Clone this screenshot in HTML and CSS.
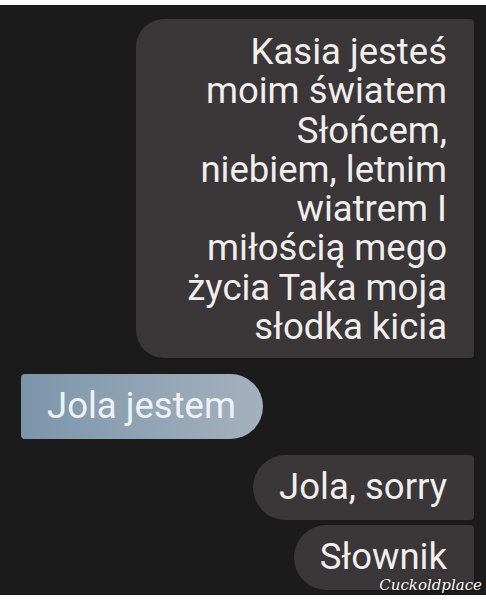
FILE: index.html
```html
<!DOCTYPE html>
<html lang="pl">
<head>
    <meta charset="UTF-8">
    <meta name="viewport" content="width=device-width, initial-scale=1.0">
    <title>Rozmowa</title>
    <link rel="stylesheet" href="styles.css">
</head>
<body>
    <div class="ekran">
        <div class="czat">
            <div class="dymek wyslany duzy">
                Kasia jesteś<br>
                moim światem<br>
                Słońcem,<br>
                niebiem, letnim<br>
                wiatrem I<br>
                miłością mego<br>
                życia Taka moja<br>
                słodka kicia
            </div>
            <div class="dymek odebrany">Jola jestem</div>
            <div class="dymek wyslany okragly">Jola, sorry</div>
            <div class="dymek wyslany okragly blisko">Słownik</div>
        </div>
        <div class="znak">Cuckoldplace</div>
    </div>
</body>
</html>
```

FILE: styles.css
```css
body { margin: 0; background: #fff; font-family: Roboto, "Noto Sans", sans-serif; }
.ekran { position: relative; margin-top: 5px; height: 590px; background: #1b1b1c; overflow: hidden; }
.czat { display: flex; flex-direction: column; align-items: flex-end; padding: 14px 12px 0 21px; }
.dymek { color: #f1eeee; font-size: 36.5px; line-height: 39.3px; }
.wyslany { background: #3b3738; text-align: right; padding-right: 27px; }
.duzy { width: 338px; box-sizing: border-box; height: 339px; padding-top: 13px; border-radius: 28px 4px 4px 28px; }
.odebrany { align-self: flex-start; margin-top: 16px; width: 242px; height: 65px; box-sizing: border-box; padding: 12px 0 0 26px; border-radius: 4px 33px 33px 4px; background: linear-gradient(90deg, #7c95ab, #a5b1bd); color: #eef2f5; }
.okragly { height: 65px; box-sizing: border-box; padding-top: 12px; padding-left: 26px; border-radius: 33px 4px 4px 33px; margin-top: 16px; }
.blisko { margin-top: 5px; }
.znak { position: absolute; right: 4px; bottom: 2px; color: #fff; font-family: "DejaVu Serif", serif; font-style: italic; font-size: 15px; line-height: 16px; text-shadow: 0 0 2px #000; }
```
